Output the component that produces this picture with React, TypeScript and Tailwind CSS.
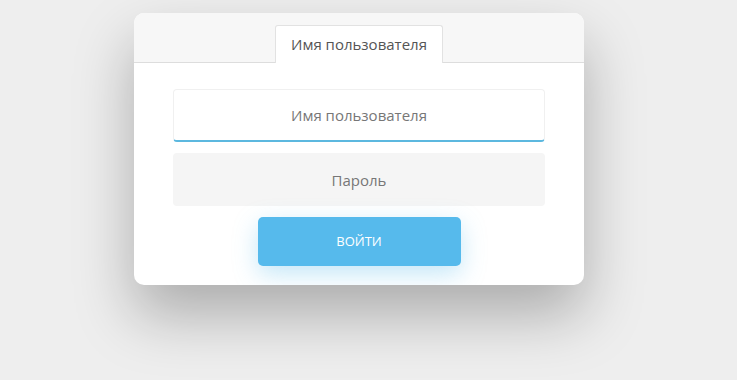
export default function App() {
  return (
    <div
      className="w-full h-[380px] bg-[#eeeeee] flex justify-center pt-[13px] overflow-hidden"
      style={{ fontFamily: '"Open Sans", "Liberation Sans", sans-serif' }}
    >
      <div className="w-[450px] h-[272px] bg-white rounded-[10px] shadow-[0_30px_60px_rgba(0,0,0,0.28)] overflow-hidden flex flex-col ml-[-19px]">
        <div className="h-[50px] bg-[#f7f7f7] border-b border-[#dddddd] flex justify-center items-end">
          <div className="w-[168px] h-[38px] bg-white border border-b-0 border-[#e2e2e2] rounded-t-[3px] mb-[-1px] flex items-center justify-center text-[15px] text-[#555555]">
            Имя пользователя
          </div>
        </div>
        <div className="flex flex-col items-center px-[39px] pt-[26px]">
          <input
            placeholder="Имя пользователя"
            className="w-full h-[53px] bg-white border border-[#f0f0f0] border-b-2 border-b-[#5cb8df] rounded-[4px] text-center text-[15px] text-[#555] placeholder:text-[#777] outline-none"
          />
          <input
            type="password"
            placeholder="Пароль"
            className="w-full h-[53px] mt-[11px] bg-[#f5f5f5] rounded-[4px] text-center text-[15px] text-[#555] placeholder:text-[#777] outline-none"
          />
          <button className="w-[203px] h-[49px] mt-[11px] bg-[#56baec] rounded-[5px] text-white text-[13px] font-medium shadow-[0_8px_24px_rgba(86,186,236,0.35)]">
            ВОЙТИ
          </button>
        </div>
      </div>
    </div>
  );
}
